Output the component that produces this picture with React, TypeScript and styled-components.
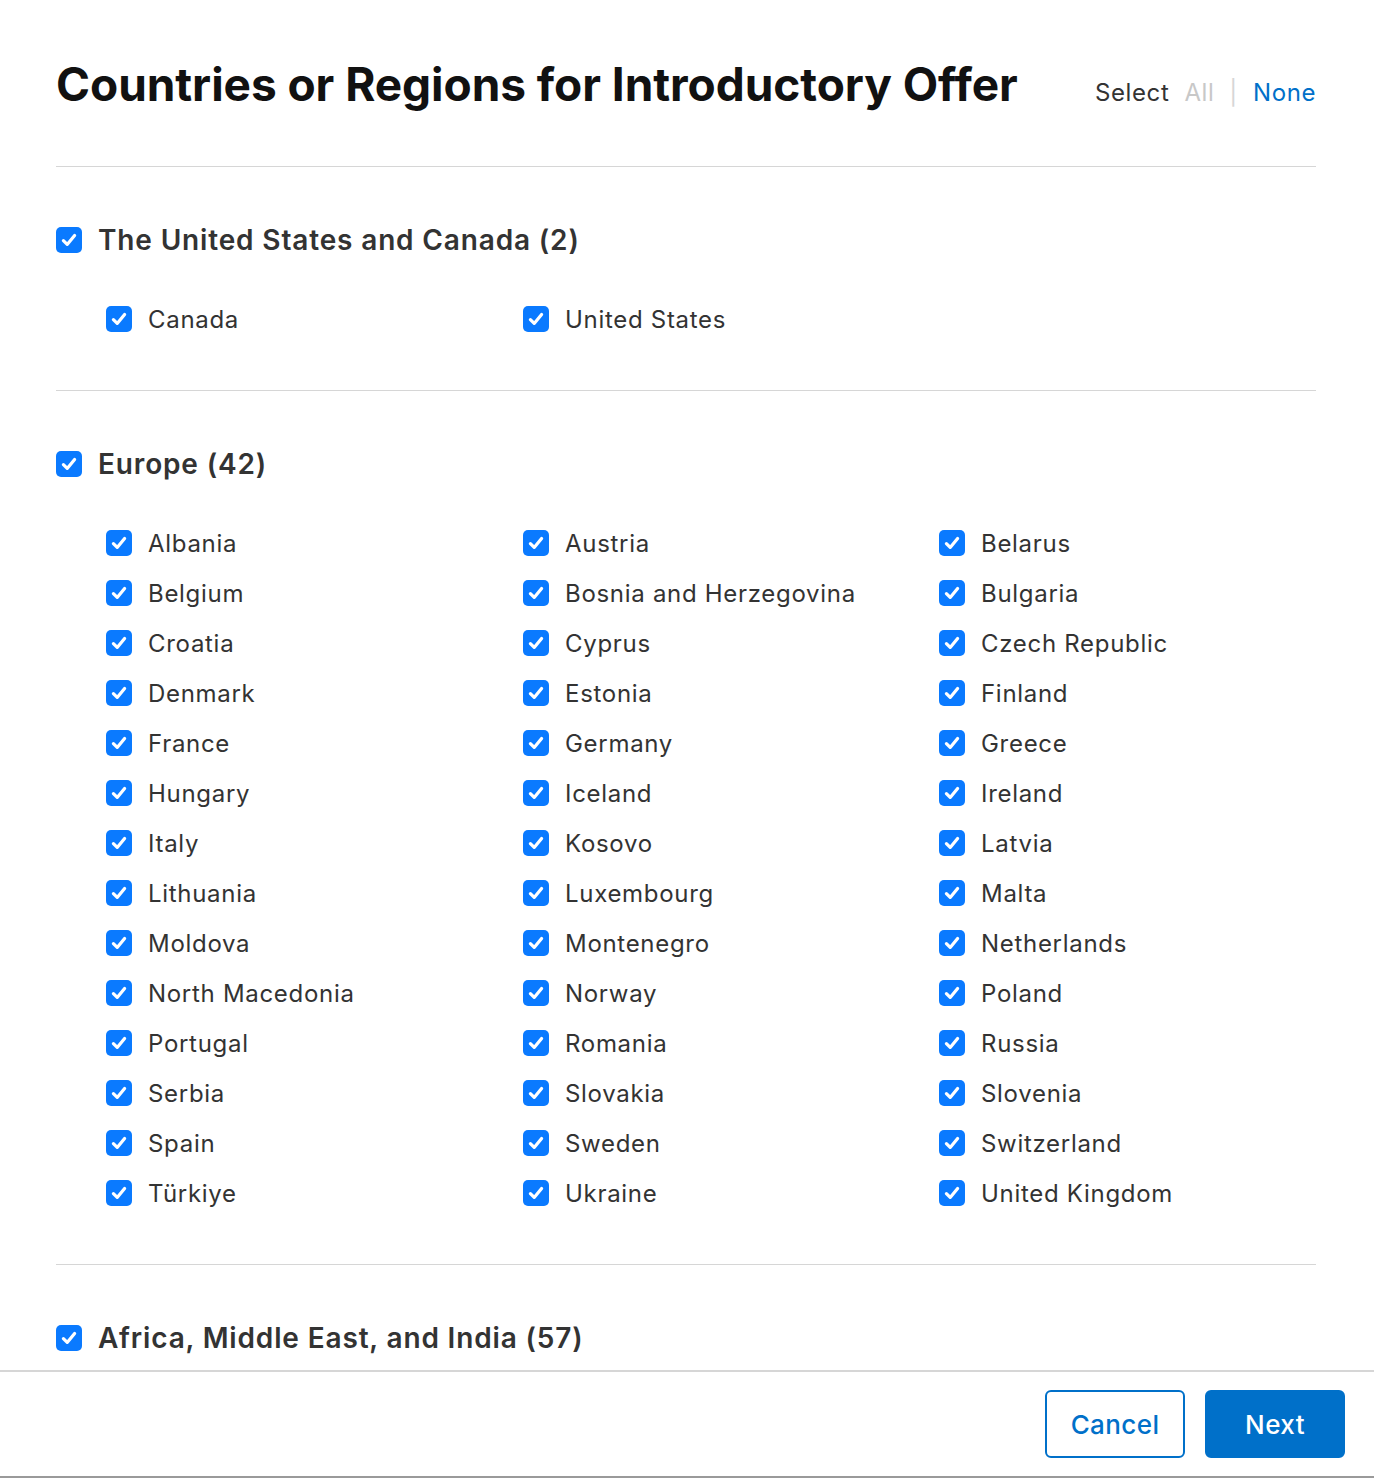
import styled, { createGlobalStyle } from "styled-components";

const GlobalStyle = createGlobalStyle`
  html, body {
    margin: 0;
    padding: 0;
    background: #fff;
  }
  body {
    font-family: Inter, "Noto Sans", "Liberation Sans", sans-serif;
    -webkit-font-smoothing: antialiased;
  }
  * {
    box-sizing: border-box;
  }
`;

const Dialog = styled.div`
  width: 1374px;
  height: 1478px;
  display: flex;
  flex-direction: column;
  background: #fff;
  border-bottom: 2px solid #9a9a9a;
`;

const Body = styled.div`
  flex: 1;
  overflow: hidden;
  padding: 0 58px 0 56px;
`;

const Header = styled.div`
  display: flex;
  align-items: baseline;
  justify-content: space-between;
  padding: 56px 0 54px;
`;

const Title = styled.h1`
  margin: 0;
  font-size: 46px;
  line-height: 56px;
  font-weight: 700;
  color: #111;
  letter-spacing: -0.05px;
`;

const SelectBar = styled.div`
  display: flex;
  align-items: baseline;
  gap: 15px;
  font-size: 24px;
  letter-spacing: 0.6px;
  color: #333;
`;

const SelectLink = styled.span<{ $active?: boolean }>`
  color: ${(p) => (p.$active ? "#0070c9" : "#c8c8c8")};
`;

const Pipe = styled.span`
  color: #d6d6d6;
`;

const Section = styled.section`
  border-top: 1px solid #d6d6d6;
  padding: 56px 0 46px;
`;

const GroupLabel = styled.label`
  display: flex;
  align-items: center;
  gap: 16px;
  font-size: 28px;
  line-height: 34px;
  font-weight: 600;
  letter-spacing: 0.85px;
  color: #333;
`;

const Grid = styled.div`
  display: grid;
  grid-template-columns: 417px 416px 1fr;
  margin: 37px 0 0 50px;
`;

const Item = styled.label`
  display: flex;
  align-items: center;
  gap: 16px;
  height: 50px;
  font-size: 24px;
  letter-spacing: 0.7px;
  color: #333;
`;

const Box = styled.span`
  width: 26px;
  height: 26px;
  flex: none;
  border-radius: 5px;
  background: #0a7aff;
  display: flex;
  align-items: center;
  justify-content: center;
`;

const Footer = styled.div`
  height: 106px;
  flex: none;
  border-top: 2px solid #d6d6d6;
  display: flex;
  align-items: center;
  justify-content: flex-end;
  gap: 20px;
  padding: 0 29px 0 0;
`;

const Button = styled.button<{ $primary?: boolean }>`
  width: 140px;
  height: 68px;
  border-radius: 6px;
  font-family: inherit;
  font-size: 26px;
  font-weight: 500;
  letter-spacing: 0.4px;
  cursor: pointer;
  border: 2px solid #0070c9;
  background: ${(p) => (p.$primary ? "#0070c9" : "#fff")};
  color: ${(p) => (p.$primary ? "#fff" : "#0070c9")};
`;

const Check = () => (
  <Box>
    <svg width="18" height="18" viewBox="0 0 18 18">
      <path
        d="M3.4 9.6 L7.2 13.4 L14.6 4.4"
        fill="none"
        stroke="#fff"
        strokeWidth="3.2"
        strokeLinecap="round"
        strokeLinejoin="round"
      />
    </svg>
  </Box>
);

const groups = [
  {
    name: "The United States and Canada (2)",
    items: ["Canada", "United States"],
  },
  {
    name: "Europe (42)",
    items: [
      "Albania", "Austria", "Belarus",
      "Belgium", "Bosnia and Herzegovina", "Bulgaria",
      "Croatia", "Cyprus", "Czech Republic",
      "Denmark", "Estonia", "Finland",
      "France", "Germany", "Greece",
      "Hungary", "Iceland", "Ireland",
      "Italy", "Kosovo", "Latvia",
      "Lithuania", "Luxembourg", "Malta",
      "Moldova", "Montenegro", "Netherlands",
      "North Macedonia", "Norway", "Poland",
      "Portugal", "Romania", "Russia",
      "Serbia", "Slovakia", "Slovenia",
      "Spain", "Sweden", "Switzerland",
      "Türkiye", "Ukraine", "United Kingdom",
    ],
  },
  {
    name: "Africa, Middle East, and India (57)",
    items: [],
  },
];

const App = () => {
  return (
    <>
      <GlobalStyle />
      <Dialog>
        <Body>
          <Header>
            <Title>Countries or Regions for Introductory Offer</Title>
            <SelectBar>
              <span>Select</span>
              <SelectLink>All</SelectLink>
              <Pipe>|</Pipe>
              <SelectLink $active>None</SelectLink>
            </SelectBar>
          </Header>
          {groups.map((g) => (
            <Section key={g.name}>
              <GroupLabel>
                <Check />
                {g.name}
              </GroupLabel>
              {g.items.length > 0 && (
                <Grid>
                  {g.items.map((c) => (
                    <Item key={c}>
                      <Check />
                      {c}
                    </Item>
                  ))}
                </Grid>
              )}
            </Section>
          ))}
        </Body>
        <Footer>
          <Button>Cancel</Button>
          <Button $primary>Next</Button>
        </Footer>
      </Dialog>
    </>
  );
};

export default App;
